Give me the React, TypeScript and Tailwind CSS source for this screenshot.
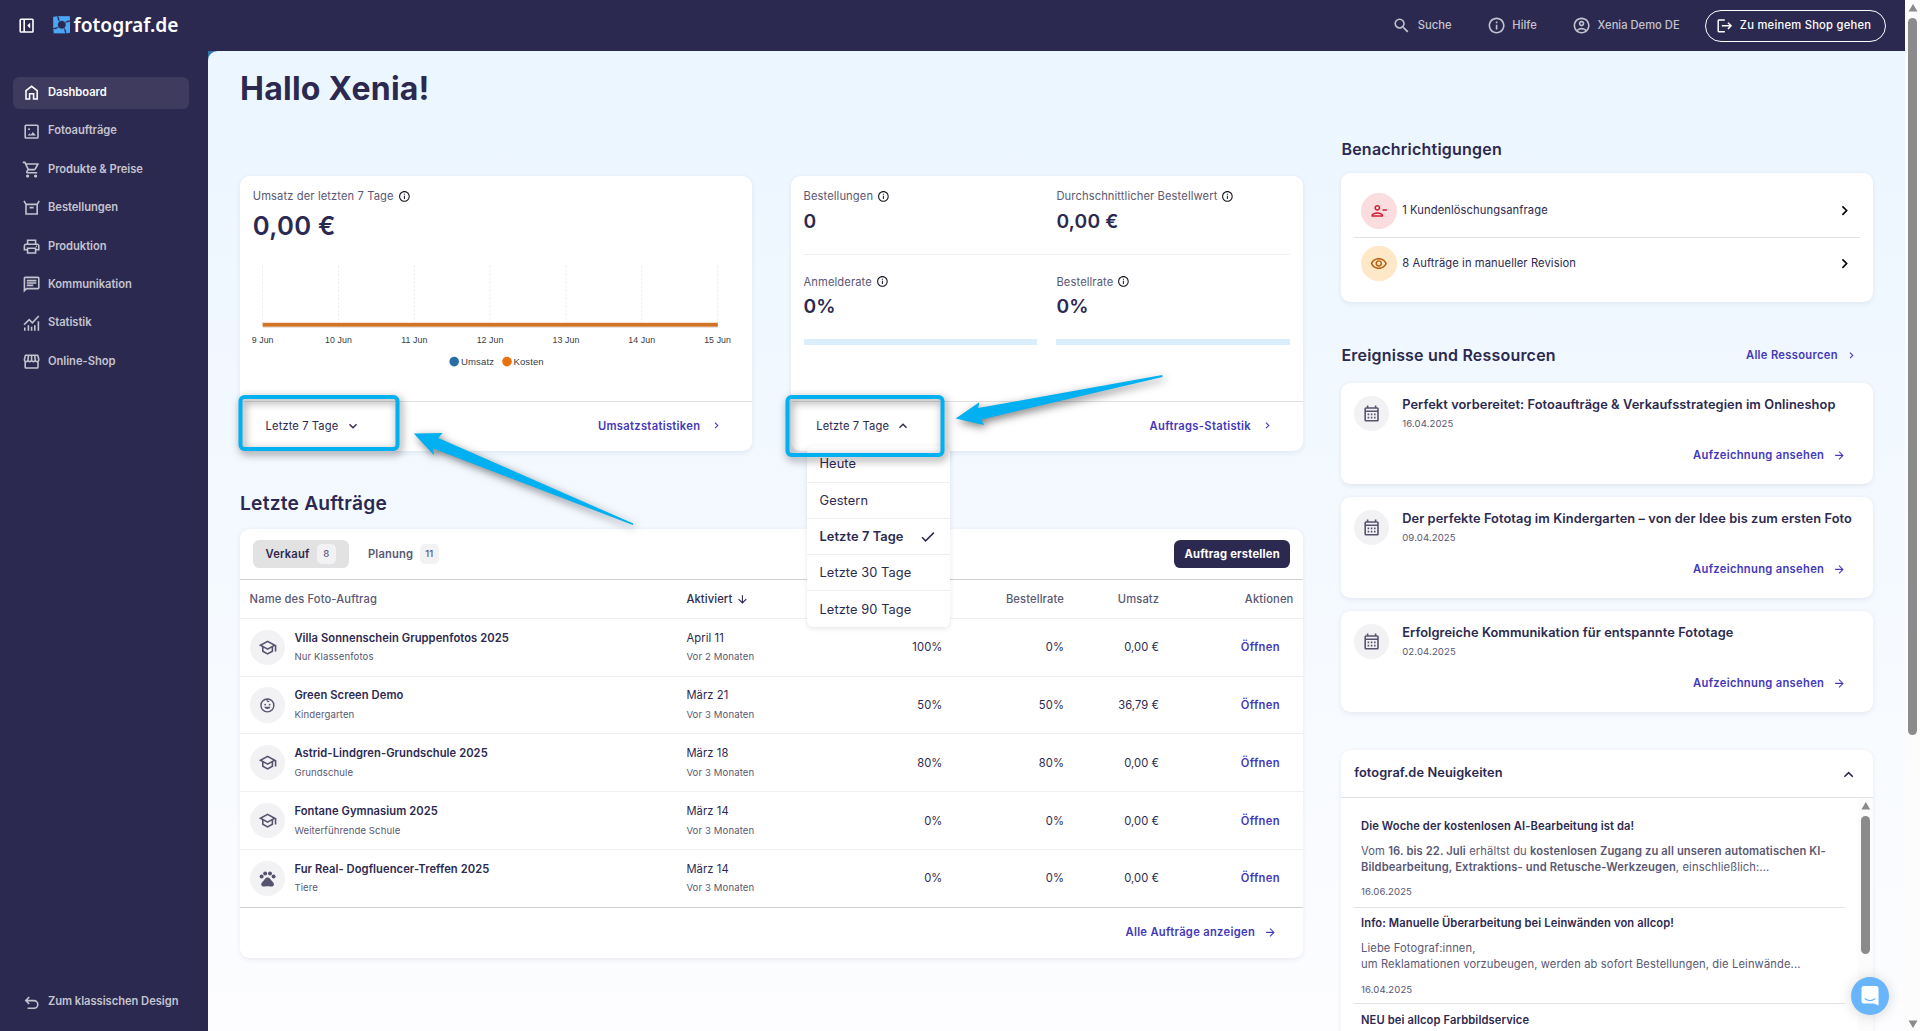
import type { ReactNode } from 'react'
import clsx from 'clsx'
import {
  MdArrowDownward,
  MdArrowForward,
  MdCheck,
  MdChevronRight,
  MdExpandLess,
  MdExpandMore,
  MdInfoOutline,
  MdLogout,
  MdOutlineAccountCircle,
  MdOutlineCalendarMonth,
  MdOutlineChat,
  MdOutlinePersonRemove,
  MdOutlinePrint,
  MdOutlineSchool,
  MdOutlineShoppingCart,
  MdOutlineStorefront,
  MdOutlineVisibility,
  MdPets,
  MdSearch,
} from 'react-icons/md'

/* Icons */

function Icon({ children, className = 'size-6' }: { children: ReactNode; className?: string }) {
  return (
    <svg className={className} viewBox="0 0 24 24" fill="none" stroke="currentColor" strokeWidth={2}>
      {children}
    </svg>
  )
}

const HomeIcon = () => (
  <Icon>
    <path d="M5 20V9.500L12 4.200l7 5.300V20h-4.500v-6.500h-5V20z" />
  </Icon>
)

const PhotoIcon = () => (
  <Icon>
    <rect x="4" y="4" width="16" height="16" rx="1" />
    <path d="M7 17l2.400-3 1.600 1.800 2.600-3.400L17.500 17z" fill="currentColor" stroke="none" />
    <circle cx="8.800" cy="9" r="1.300" fill="currentColor" stroke="none" />
  </Icon>
)

const BoxIcon = () => (
  <Icon>
    <path d="M2.500 3.500L5 8v12h14V8l2.500-4.500M5 8h14M9.500 12h5" />
  </Icon>
)

const StatsIcon = () => (
  <Icon>
    <path d="M3.500 17v4M8 14v7M12 16v5M16 14v7M20.500 9v12" />
    <path d="M2.500 13.500L9 7l4 4 8-8.500" />
  </Icon>
)

const UndoIcon = () => (
  <Icon>
    <path d="M7 19h8a4.600 4.600 0 000-9.500H5M9 5L4.800 9.400 9 13.800" />
  </Icon>
)

const ChildIcon = () => (
  <Icon className="size-[21px]">
    <circle cx="12" cy="12" r="9.200" />
    <path d="M12 3c-1.600 2.600.600 4.400 2.600 3.200" strokeWidth={1.5} />
    <circle cx="8.800" cy="10.800" r="1.300" fill="currentColor" stroke="none" />
    <circle cx="15.200" cy="10.800" r="1.300" fill="currentColor" stroke="none" />
    <path d="M7.500 14h9c-.8 2-2.500 3.200-4.500 3.200S8.300 16 7.500 14z" fill="currentColor" stroke="none" />
  </Icon>
)

const PanelIcon = () => (
  <Icon>
    <rect x="4" y="4" width="16" height="16" rx="1" />
    <path d="M9 4v16" />
    <path d="M16.500 8.500v7L12.800 12z" fill="currentColor" stroke="none" />
  </Icon>
)

const blade = 'M5.800 0H20.200L21 5.400C18.500 5.200 16 6 14.200 7.800A4.600 4.600 0 007.600 7C7.600 4.500 7 2 5.800 0Z'

function Logo() {
  return (
    <div className="flex items-center">
      <svg className="mb-[2px] size-[22px]" viewBox="0 0 21 21" fill="#4ba6f8" stroke="#2c2950" strokeWidth=".4">
        <path d={blade} />
        <path d={blade} transform="rotate(90 10.5 10.5)" />
        <path d={blade} transform="rotate(180 10.5 10.5)" />
        <path d={blade} transform="rotate(270 10.5 10.5)" />
      </svg>
      <span className="mb-[2px] ml-[4px] font-['Noto_Sans',sans-serif] text-[24px] leading-none font-semibold text-white">fotograf.de</span>
    </div>
  )
}

/* Data */

const navItems = [
  { label: 'Dashboard', icon: <HomeIcon />, active: true },
  { label: 'Fotoaufträge', icon: <PhotoIcon /> },
  { label: 'Produkte & Preise', icon: <MdOutlineShoppingCart className="size-6" /> },
  { label: 'Bestellungen', icon: <BoxIcon /> },
  { label: 'Produktion', icon: <MdOutlinePrint className="size-6" /> },
  { label: 'Kommunikation', icon: <MdOutlineChat className="size-6" /> },
  { label: 'Statistik', icon: <StatsIcon /> },
  { label: 'Online-Shop', icon: <MdOutlineStorefront className="size-6" /> },
]

const days = ['9 Jun', '10 Jun', '11 Jun', '12 Jun', '13 Jun', '14 Jun', '15 Jun']

const periods = ['Heute', 'Gestern', 'Letzte 7 Tage', 'Letzte 30 Tage', 'Letzte 90 Tage']

const school = <MdOutlineSchool className="size-6" />

const jobs = [
  { icon: school, name: 'Villa Sonnenschein Gruppenfotos 2025', type: 'Nur Klassenfotos', date: 'April 11', ago: 'Vor 2 Monaten', signup: '100%', rate: '0%', revenue: '0,00 €' },
  { icon: <ChildIcon />, name: 'Green Screen Demo', type: 'Kindergarten', date: 'März 21', ago: 'Vor 3 Monaten', signup: '50%', rate: '50%', revenue: '36,79 €' },
  { icon: school, name: 'Astrid-Lindgren-Grundschule 2025', type: 'Grundschule', date: 'März 18', ago: 'Vor 3 Monaten', signup: '80%', rate: '80%', revenue: '0,00 €' },
  { icon: school, name: 'Fontane Gymnasium 2025', type: 'Weiterführende Schule', date: 'März 14', ago: 'Vor 3 Monaten', signup: '0%', rate: '0%', revenue: '0,00 €' },
  { icon: <MdPets className="size-6" />, name: 'Fur Real- Dogfluencer-Treffen 2025', type: 'Tiere', date: 'März 14', ago: 'Vor 3 Monaten', signup: '0%', rate: '0%', revenue: '0,00 €' },
]

const events = [
  { title: 'Perfekt vorbereitet: Fotoaufträge & Verkaufsstrategien im Onlineshop', date: '16.04.2025' },
  { title: 'Der perfekte Fototag im Kindergarten – von der Idee bis zum ersten Foto', date: '09.04.2025' },
  { title: 'Erfolgreiche Kommunikation für entspannte Fototage', date: '02.04.2025' },
]

const news = [
  {
    title: 'Die Woche der kostenlosen AI-Bearbeitung ist da!',
    body: (
      <>
        Vom <b className="font-semibold">16. bis 22. Juli</b> erhältst du{' '}
        <b className="font-semibold">kostenlosen Zugang zu all unseren automatischen KI-<br />Bildbearbeitung, Extraktions- und Retusche-Werkzeugen</b>, einschließlich:...
      </>
    ),
    date: '16.06.2025',
  },
  {
    title: 'Info: Manuelle Überarbeitung bei Leinwänden von allcop!',
    body: (
      <>
        Liebe Fotograf:innen,
        <br />
        um Reklamationen vorzubeugen, werden ab sofort Bestellungen, die Leinwände...
      </>
    ),
    date: '16.04.2025',
  },
  { title: 'NEU bei allcop Farbbildservice', body: null, date: '' },
]

/* Building blocks */

function Card({ className, children }: { className?: string; children: ReactNode }) {
  return (
    <section className={clsx('rounded-xl bg-white shadow-[0_2px_6px_rgba(44,41,80,0.08)]', className)}>{children}</section>
  )
}

function MetricLabel({ children }: { children: ReactNode }) {
  return (
    <div className="flex h-5 items-center gap-[5px] text-sm text-[#5a5873]">
      {children}
      <MdInfoOutline className="size-4 text-[#1b1a26]" />
    </div>
  )
}

function CardFooter({ open, link }: { open?: boolean; link: string }) {
  const Caret = open ? MdExpandLess : MdExpandMore
  return (
    <div className="flex h-[63px] items-center justify-between border-t border-[#e2e2e4] pr-[37px] pb-[2px] pl-[32px] text-sm">
      <button className="flex items-center gap-2">
        Letzte 7 Tage
        <Caret className="size-5" />
      </button>
      <a className="flex items-center gap-3 font-semibold tracking-[0.38px] text-[#4338ba]">
        {link}
        <MdChevronRight className="size-4" />
      </a>
    </div>
  )
}

function ArrowLink({ children }: { children: ReactNode }) {
  return (
    <a className="flex items-center gap-[11px] text-sm font-semibold tracking-[0.38px] text-[#4338ba]">
      {children}
      <MdArrowForward className="size-4" />
    </a>
  )
}

function RevenueChart() {
  return (
    <svg className="mt-[17px] block h-[150px] w-[608px] overflow-visible font-['Liberation_Sans',Arial,sans-serif]" viewBox="0 0 608 150">
      {days.map((day, i) => (
        <g key={day}>
          <line x1={12 + i * 94.8} x2={12 + i * 94.8} y1="12" y2="84" stroke="#e6e6e6" strokeDasharray="2.5 2.5" />
          <text x={12 + i * 94.8} y="109" textAnchor="middle" fontSize="11" fill="#373d3f">
            {day}
          </text>
        </g>
      ))}
      <rect x="12" y="83.500" width="569" height="5" fill="#d37324" />
      <rect x="12" y="88.500" width="569" height="1" fill="#d9d5d0" />
      <circle cx="251.500" cy="132" r="6" fill="#2a6ca5" />
      <text x="260" y="136" fontSize="12" fill="#373d3f">Umsatz</text>
      <circle cx="317.500" cy="132" r="6" fill="#ec700c" />
      <text x="325.500" y="136" fontSize="12" fill="#373d3f">Kosten</text>
    </svg>
  )
}

function RevenueCard() {
  return (
    <Card className="flex h-[344px] flex-1 flex-col justify-between">
      <div className="px-4 pt-[15px]">
        <MetricLabel>Umsatz der letzten 7 Tage</MetricLabel>
        <div className="mt-[8px] text-[32px] leading-10 font-semibold tracking-[0.35px]">0,00 €</div>
        <RevenueChart />
      </div>
      <CardFooter link="Umsatzstatistiken" />
    </Card>
  )
}

function Metric({ label, value }: { label: string; value: string }) {
  return (
    <div className="flex-1">
      <MetricLabel>{label}</MetricLabel>
      <div className="mt-[6px] text-2xl font-semibold tracking-[0.250px]">{value}</div>
    </div>
  )
}

function PeriodMenu() {
  return (
    <ul className="absolute top-[338px] left-[20px] z-10 w-[179px] overflow-hidden rounded-lg bg-white shadow-[0_2px_6px_rgba(44,41,80,0.1)]">
      {periods.map((period) => (
        <li
          key={period}
          className={clsx(
            'flex h-[45.250px] items-center justify-between border-b border-[#efeff2] pr-[17px] pl-4 text-base last:h-[45px] last:border-0',
            period === 'Letzte 7 Tage' && 'font-semibold',
          )}
        >
          {period}
          {period === 'Letzte 7 Tage' && <MdCheck className="size-[22px]" />}
        </li>
      ))}
    </ul>
  )
}

function OrdersCard() {
  return (
    <Card className="relative flex h-[344px] flex-1 flex-col justify-between">
      <div className="px-4 pt-[15px]">
        <div className="flex h-[84px] gap-6 border-b border-[#efeff2]">
          <Metric label="Bestellungen" value="0" />
          <Metric label="Durchschnittlicher Bestellwert" value="0,00 €" />
        </div>
        <div className="mt-[23px] flex gap-6">
          <Metric label="Anmelderate" value="0%" />
          <Metric label="Bestellrate" value="0%" />
        </div>
        <div className="mt-[24px] flex gap-6">
          <div className="h-[7px] flex-1 bg-[#dbeefd]" />
          <div className="h-[7px] flex-1 bg-[#dbeefd]" />
        </div>
      </div>
      <CardFooter open link="Auftrags-Statistik" />
      <PeriodMenu />
    </Card>
  )
}

const columns = 'grid grid-cols-[546px_188px_156px_152px_119px_1fr] items-center'

function JobsCard() {
  return (
    <Card className="mt-[17px]">
      <div className="flex h-[63px] items-center justify-between px-4">
        <div className="flex items-center gap-[24px] text-sm font-semibold tracking-[0.200px]">
          <div className="flex h-9 w-[120px] items-center justify-between rounded-lg bg-[#e2e2e3] px-4">
            Verkauf
            <span className="flex size-6 items-center justify-center rounded-md bg-[#f2f2f4] text-xs font-medium text-[#5a5873]">8</span>
          </div>
          <div className="flex h-9 items-center gap-2 text-[#5a5873]">
            Planung
            <span className="flex h-6 items-center justify-center rounded-md bg-[#f2f2f4] px-[7px] text-xs font-medium">11</span>
          </div>
        </div>
        <button className="h-9 rounded-lg bg-[#2c2950] px-[13px] pb-px text-sm font-bold tracking-[0.250px] text-white">Auftrag erstellen</button>
      </div>
      <div className={clsx(columns, 'h-[49.500px] border-t border-b border-t-[#cfcfd2] border-b-[#efeff2] text-sm font-medium tracking-[0.150px] text-[#5a5873]')}>
        <div className="pl-3">Name des Foto-Auftrag</div>
        <div className="flex items-center gap-1 pl-3 text-[#2c2950]">
          Aktiviert
          <MdArrowDownward className="size-4" />
        </div>
        <div />
        <div className="pr-3 text-right">Bestellrate</div>
        <div className="pr-3 text-right">Umsatz</div>
        <div className="pr-3 text-right">Aktionen</div>
      </div>
      {jobs.map((job) => (
        <div key={job.name} className={clsx(columns, 'h-[72.250px] border-b border-[#efeff2] text-sm last-of-type:border-[#cfcfd2]')}>
          <div className="flex items-center gap-3 pl-3">
            <div className="flex size-11 items-center justify-center rounded-full bg-[#f2f2f4] text-[#56536f]">{job.icon}</div>
            <div className="pb-px">
              <div className="font-semibold tracking-[0.08px]">{job.name}</div>
              <div className="mt-[7px] text-xs text-[#5a5873]">{job.type}</div>
            </div>
          </div>
          <div className="pb-px pl-3">
            <div>{job.date}</div>
            <div className="mt-[7px] text-xs text-[#5a5873]">{job.ago}</div>
          </div>
          <div className="pr-3 text-right">{job.signup}</div>
          <div className="pr-3 text-right">{job.rate}</div>
          <div className="pr-3 text-right">{job.revenue}</div>
          <div className="pr-[29px] text-right font-semibold tracking-[0.38px] text-[#4338ba]">Öffnen</div>
        </div>
      ))}
      <footer className="flex h-[63px] items-center justify-end pr-[33px] pb-[2px]">
        <ArrowLink>Alle Aufträge anzeigen</ArrowLink>
      </footer>
    </Card>
  )
}

function Notification({ icon, tone, children }: { icon: ReactNode; tone: string; children: ReactNode }) {
  return (
    <div className="flex h-[65px] items-center border-b border-[#e2e2e4] px-[9px] text-sm last:border-0">
      <div className={clsx('flex size-11 items-center justify-center rounded-full', tone)}>{icon}</div>
      <span className="mb-[2px] ml-[7px] flex-1">{children}</span>
      <MdChevronRight className="-mr-px size-6 text-black" />
    </div>
  )
}

function NewsCard() {
  return (
    <Card className="mt-[47px]">
      <div className="flex h-[60px] items-center justify-between border-b border-[#e2e2e4] pr-[19px] pb-[2px] pl-4 text-base font-semibold">
        fotograf.de Neuigkeiten
        <MdExpandLess className="mt-1 size-6" />
      </div>
      <div className="flex h-[400px] overflow-hidden">
        <div className="flex-1 px-4 pt-4">
          {news.map((item, i) => (
            <article key={item.title} className="h-[121px] border-b border-[#e2e2e4] px-[8.500px] pt-[9px]">
              <h3 className="text-sm font-semibold">{item.title}</h3>
              <p className="mt-[11px] text-sm leading-5 tracking-[0.14px] text-[#5a5873]">{item.body}</p>
              <div className={clsx('text-xs text-[#5a5873]', i === 0 ? 'mt-[14px]' : 'mt-[15px]')}>{item.date}</div>
            </article>
          ))}
        </div>
        <div className="flex w-[19px] flex-col items-center bg-[#fcfcfc]">
          <svg className="mt-[5px] h-[10px] w-3" viewBox="0 0 12 10">
            <path d="M6 0l5.500 9.500H.5z" fill="#8b8b8b" />
          </svg>
          <div className="mt-[8px] h-[172px] w-[11px] rounded-full bg-[#8b8b8b]" />
        </div>
      </div>
    </Card>
  )
}

function Sidebar() {
  return (
    <nav className="flex w-[260px] flex-col gap-2 pt-[32px] pr-6 pb-4 pl-4 text-sm font-semibold tracking-[-0.05px] text-[#c4c3ce]">
      {navItems.map((item) => (
        <a
          key={item.label}
          className={clsx('flex h-10 items-center gap-2 rounded-lg px-3', item.active && 'bg-[#3e3b5f] text-white')}
        >
          {item.icon}
          <span className="-mt-0.5">{item.label}</span>
        </a>
      ))}
      <a className="mt-auto flex h-10 items-center gap-2 px-3 whitespace-nowrap">
        <UndoIcon />
        <span className="-mt-0.5">Zum klassischen Design</span>
      </a>
    </nav>
  )
}

function Header() {
  return (
    <header className="flex h-16 items-center pr-6 pl-[21px] text-sm font-medium tracking-normal text-[#c4c3ce]">
      <span className="mr-[21px] text-white">
        <PanelIcon />
      </span>
      <Logo />
      <div className="ml-auto flex items-center">
        <span className="flex items-center gap-2">
          <MdSearch className="size-6" />
          <span className="mb-0.5">Suche</span>
        </span>
        <span className="ml-11 flex items-center gap-2">
          <MdInfoOutline className="size-6" />
          <span className="mb-0.5">Hilfe</span>
        </span>
        <span className="ml-11 flex items-center gap-2">
          <MdOutlineAccountCircle className="size-6" />
          <span className="mb-0.5">Xenia Demo DE</span>
        </span>
        <button className="ml-[32px] flex h-10 items-center gap-2 rounded-full border border-white pr-[17px] pl-[12px] text-white">
          <MdLogout className="size-[22px]" />
          <span className="mb-0.5 tracking-[0.3px]">Zu meinem Shop gehen</span>
        </button>
      </div>
    </header>
  )
}

// Arrows and frames pointing at the two period selectors
function Annotations() {
  return (
    <svg className="pointer-events-none absolute inset-0 z-20 h-full w-full" viewBox="0 0 1920 1031">
      <g className="drop-shadow-[2px_3px_4px_rgba(0,0,0,0.500)]">
        <rect x="240.500" y="397" width="157" height="52" rx="4" fill="none" stroke="#00b0f0" strokeWidth="4" />
      </g>
      <g className="drop-shadow-[2px_3px_4px_rgba(0,0,0,0.500)]">
        <rect x="787.500" y="397" width="155" height="58" rx="4" fill="none" stroke="#00b0f0" strokeWidth="4" />
      </g>
      <g className="drop-shadow-[2px_3px_4px_rgba(0,0,0,0.500)]" fill="#00b0f0">
        <path d="M413.800 433.500l28.700-.4-4.200 5 195 85.500-.5 1.400-199.600-76.500.8 6.700z" />
        <path d="M955.700 418.500l23.600-16.200-1 5.700 184-33 .2 1.900-181.100 42.500 2.600 5.600z" />
      </g>
    </svg>
  )
}

export default function App() {
  return (
    <div className="relative flex h-[1031px] w-[1920px] overflow-hidden bg-[#2c2950] font-['Inter',sans-serif]">
      <div className="h-[1288.750px] w-[2381.250px] shrink-0 tracking-[0.12px] text-[#2c2950] [zoom:0.8]">
        <Header />
        <div className="flex h-[1224.750px]">
          <Sidebar />
          <div className="flex-1 bg-[linear-gradient(135deg,#2f76ad_40px,transparent_40px)]">
            <main className="flex h-full gap-12 overflow-hidden rounded-tl-xl bg-linear-to-b from-[#ebf6ff] via-[#f4f9ff] via-50% to-[#fdfdff] px-10">
              <div className="flex-1">
                <h1 className="mt-[24px] text-[40px] leading-[48px] font-bold tracking-[0.3px]">Hallo Xenia!</h1>
                <div className="mt-[84px] flex gap-12">
                  <RevenueCard />
                  <OrdersCard />
                </div>
                <h2 className="mt-[50px] text-2xl leading-[30px] font-semibold tracking-[0.28px]">Letzte Aufträge</h2>
                <JobsCard />
              </div>
              <div className="w-[664.500px]">
                <h2 className="mt-[107px] text-[20px] leading-[30px] font-semibold tracking-[0.28px]">Benachrichtigungen</h2>
                <Card className="mt-[15px] h-[162px] px-4 pt-4">
                  <Notification tone="bg-[#fbdde0] text-[#cf1f35]" icon={<MdOutlinePersonRemove className="size-[22px]" />}>
                    1 Kundenlöschungsanfrage
                  </Notification>
                  <Notification tone="bg-[#fee8c8] text-[#b85c0e]" icon={<MdOutlineVisibility className="size-[22px]" />}>
                    8 Aufträge in manueller Revision
                  </Notification>
                </Card>
                <div className="mt-[51px] flex h-[30px] items-center justify-between pr-[19px]">
                  <h2 className="text-[20px] font-semibold tracking-[0.250px]">Ereignisse und Ressourcen</h2>
                  <a className="flex items-center gap-[9px] text-sm font-semibold tracking-[0.38px] text-[#4338ba]">
                    Alle Ressourcen
                    <MdChevronRight className="size-4" />
                  </a>
                </div>
                <div className="mt-5 flex flex-col gap-4">
                  {events.map((event) => (
                    <Card key={event.title} className="flex h-[126.500px] gap-4 p-4">
                      <div className="flex size-11 shrink-0 items-center justify-center rounded-full bg-[#f2f2f4] text-[#56536f]">
                        <MdOutlineCalendarMonth className="size-6" />
                      </div>
                      <div className="flex flex-1 flex-col">
                        <div className="-mt-px text-base leading-6 font-semibold tracking-[0.1px] whitespace-nowrap">{event.title}</div>
                        <div className="mt-[4px] text-xs text-[#5a5873]">{event.date}</div>
                        <div className="mt-[21px] self-end pr-[18px]">
                          <ArrowLink>Aufzeichnung ansehen</ArrowLink>
                        </div>
                      </div>
                    </Card>
                  ))}
                </div>
                <NewsCard />
              </div>
            </main>
          </div>
        </div>
      </div>

      {/* Page scrollbar */}
      <div className="flex h-full w-[15px] shrink-0 flex-col items-center bg-[#fcfcfc]">
        <svg className="mt-[4px] h-2 w-[10px]" viewBox="0 0 10 8">
          <path d="M5 0l4.500 7.500h-9z" fill="#8b8b8b" />
        </svg>
        <div className="mt-[6px] h-[717px] w-[9px] rounded-full bg-[#8b8b8b]" />
        <svg className="mt-auto mb-[3px] h-2 w-[10px]" viewBox="0 0 10 8">
          <path d="M5 8L.5.5h9z" fill="#8b8b8b" />
        </svg>
      </div>

      <Annotations />

      {/* Chat launcher */}
      <button className="absolute right-[31px] bottom-[16px] z-30 flex size-[38px] items-center justify-center rounded-full bg-[#68b5fb] shadow-[0_1px_14px_rgba(0,0,0,0.160)]">
        <svg className="size-[20px]" viewBox="0 0 20 20">
          <path d="M4 0h12a2.500 2.500 0 012.500 2.500V19.500L14 17.500H4A2.500 2.500 0 011.500 15V2.500A2.500 2.500 0 014 0z" fill="#fff" />
          <path d="M5 12.800c3 2.300 7 2.300 10 0" stroke="#68b5fb" strokeWidth="1.200" fill="none" strokeLinecap="round" />
        </svg>
      </button>
    </div>
  )
}
